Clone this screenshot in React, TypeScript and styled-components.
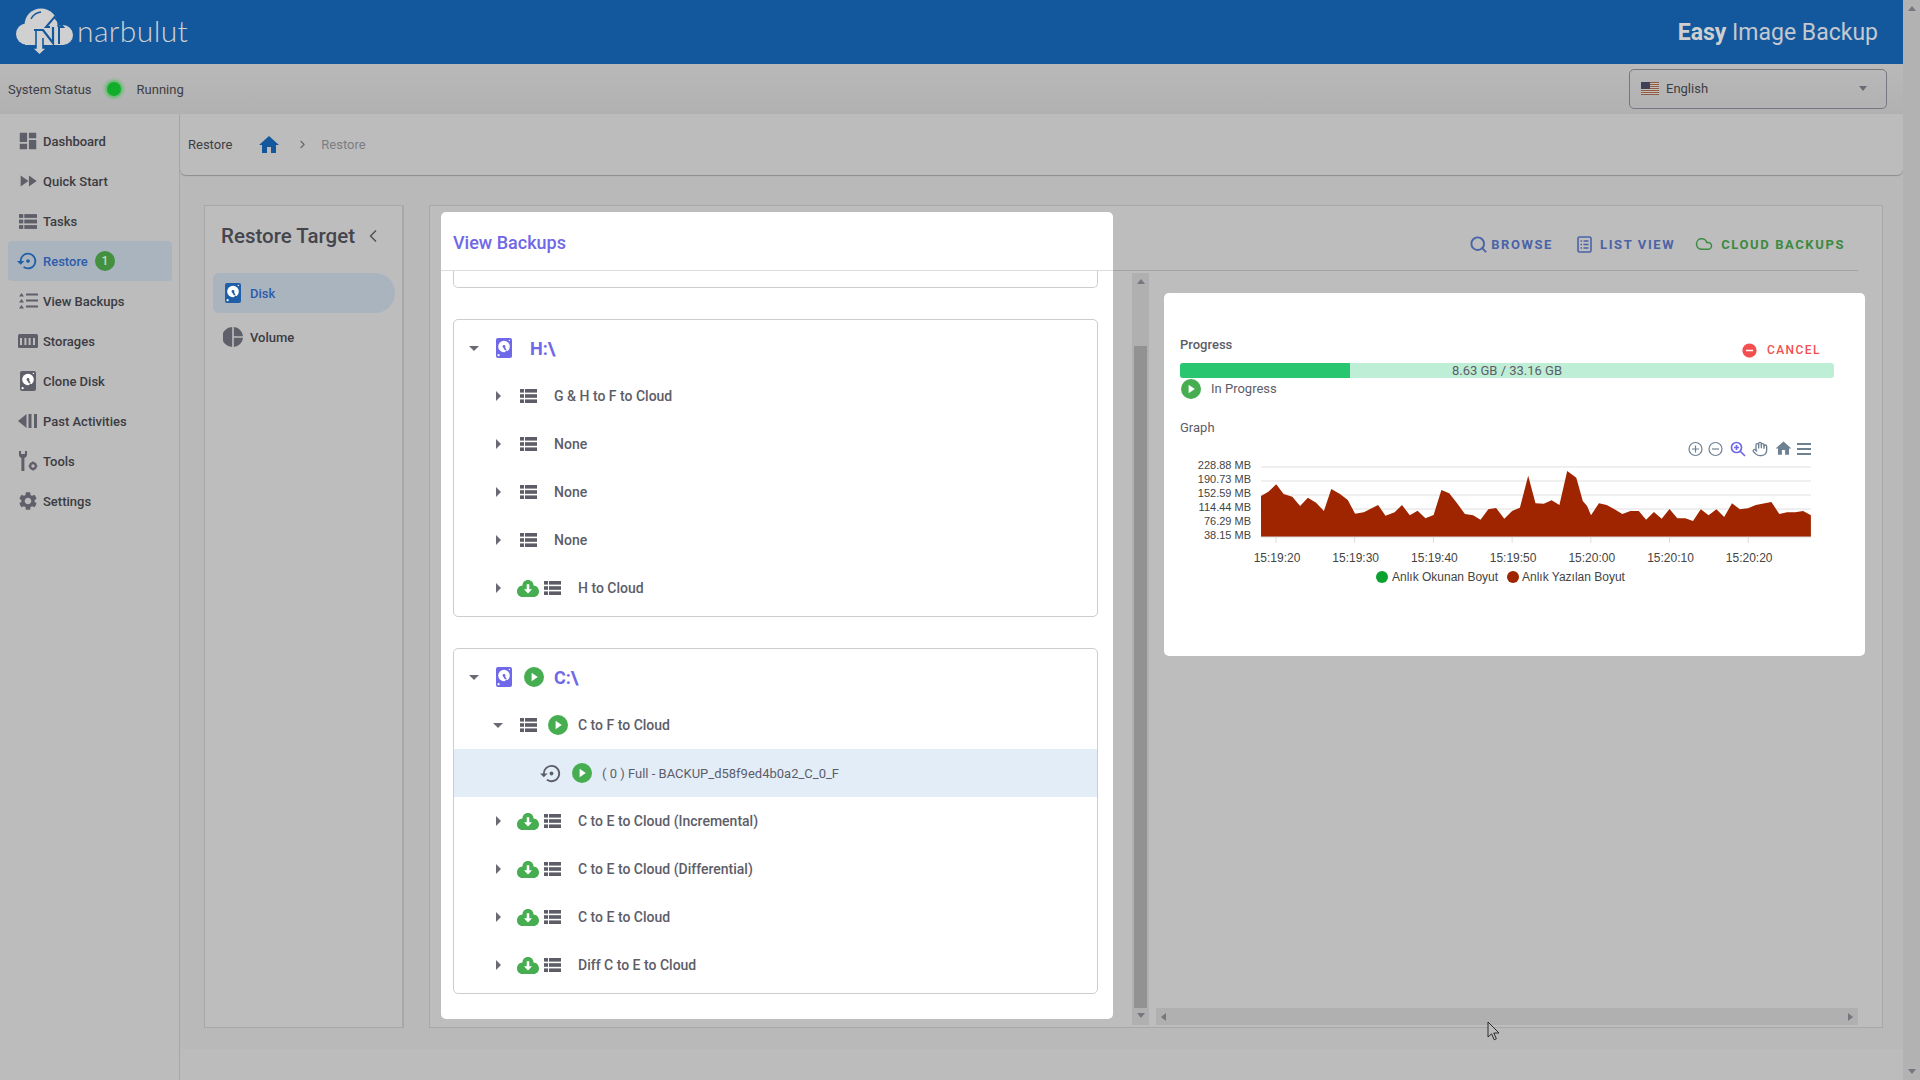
import React from 'react';
import styled, { createGlobalStyle } from 'styled-components';
import { ChevronLeft, ChevronRight, Cloud, Hand, Search } from 'lucide-react';
import {
  MdDashboard,
  MdFastForward,
  MdHome,
  MdRemoveCircle,
  MdSettings,
  MdSettingsBackupRestore,
} from 'react-icons/md';

const GlobalStyle = createGlobalStyle`
  html, body {
    margin: 0;
    padding: 0;
    width: 1920px;
    height: 1080px;
    overflow: hidden;
    background: #bcbcbc;
  }
  * { box-sizing: border-box; }
  body { font-family: "Roboto", "Liberation Sans", sans-serif; }
`;

const Root = styled.div`
  position: relative;
  display: flex;
  width: 1920px;
  height: 1080px;
  overflow: hidden;
`;

const Page = styled.div`
  display: flex;
  flex-direction: column;
  width: 1903px;
`;

const PageScroll = styled.div`
  width: 17px;
  background: #b2b2b2;
  display: flex;
  flex-direction: column;
  justify-content: space-between;
  align-items: center;
  padding: 6px 0;
`;

const Arrow = styled.span<{ $dir: 'up' | 'down' | 'left' | 'right'; $color?: string }>`
  display: block;
  width: 0;
  height: 0;
  border-style: solid;
  border-color: transparent;
  ${p => p.$dir === 'up' && `border-width: 0 4px 5px 4px; border-bottom-color: ${p.$color || '#77777f'};`}
  ${p => p.$dir === 'down' && `border-width: 5px 4px 0 4px; border-top-color: ${p.$color || '#77777f'};`}
  ${p => p.$dir === 'left' && `border-width: 4px 5px 4px 0; border-right-color: ${p.$color || '#77777f'};`}
  ${p => p.$dir === 'right' && `border-width: 4px 0 4px 5px; border-left-color: ${p.$color || '#77777f'};`}
`;

// Header
const Header = styled.header`
  height: 64px;
  flex: none;
  background: #13589d;
  display: flex;
  align-items: center;
  justify-content: space-between;
  padding: 0 25px 0 15px;
`;

const Logo = styled.div`
  display: flex;
  align-items: center;
  gap: 2px;
`;

const LogoText = styled.span`
  font-family: "Lato", "Roboto", sans-serif;
  font-weight: 300;
  font-size: 30px;
  letter-spacing: 0.4px;
  line-height: 44px;
  color: #cfcfcf;
  margin-top: -4px;
`;

const Product = styled.div`
  font-size: 23px;
  color: #c4c8cf;
  margin-top: 1px;
  b { font-weight: 700; color: #cfcfcf; }
`;

const StatusBar = styled.div`
  height: 50px;
  flex: none;
  background: linear-gradient(#b9b9b9, #b1b1b1);
  display: flex;
  align-items: center;
  padding: 0 16px 0 8px;
  font-size: 13px;
  color: #3d3d44;
`;

const StatusDot = styled.span`
  width: 14px;
  height: 14px;
  margin: 0 16px 0 15px;
  border-radius: 50%;
  background: #12ad2b;
  box-shadow: 0 0 0 2px rgba(90, 190, 105, 0.7), 0 0 0 4px rgba(120, 190, 130, 0.35);
`;

const LangSelect = styled.div`
  margin-left: auto;
  width: 258px;
  height: 40px;
  border: 1px solid #77777f;
  border-radius: 5px;
  display: flex;
  align-items: center;
  padding: 0 19px 1px 11px;
  gap: 7px;
  color: #3d3d44;
  span:last-child { margin-left: auto; }
`;

const Body = styled.div`
  flex: 1;
  display: flex;
  min-height: 0;
`;

// Sidebar
const Sidebar = styled.nav`
  width: 180px;
  flex: none;
  background: #bcbcbc;
  border-right: 1px solid #a8a8a8;
  padding: 7px 0 0 8px;
`;

const NavItem = styled.div<{ $active?: boolean }>`
  width: 164px;
  height: 40px;
  display: flex;
  align-items: center;
  padding-left: 9px;
  border-radius: 4px;
  font-size: 13px;
  font-weight: 500;
  color: ${p => (p.$active ? '#2c5cab' : '#3b3b42')};
  background: ${p => (p.$active ? '#a9b4bf' : 'transparent')};
`;

const NavIcon = styled.span<{ $active?: boolean }>`
  width: 22px;
  height: 22px;
  margin-right: 4px;
  display: flex;
  align-items: center;
  justify-content: center;
  color: ${p => (p.$active ? '#1f5ea8' : '#5f5f6a')};
`;

const Badge = styled.span`
  width: 20px;
  height: 20px;
  margin-left: 7px;
  border-radius: 50%;
  background: #43903f;
  color: #c9d9c8;
  font-size: 12px;
  display: flex;
  align-items: center;
  justify-content: center;
`;

// Content
const Content = styled.main`
  flex: 1;
  display: flex;
  flex-direction: column;
  min-width: 0;
  background: #b9b9b9;
`;

const Breadcrumb = styled.div`
  height: 61px;
  flex: none;
  background: #bcbcbc;
  border-radius: 0 0 6px 6px;
  box-shadow: 0 1px 1px #8c8c8c;
  display: flex;
  align-items: center;
  padding: 0 8px;
  font-size: 13px;
  color: #3d3d44;
`;

const Crumb = styled.span<{ $muted?: boolean; $ml?: number }>`
  margin-left: ${p => p.$ml || 0}px;
  color: ${p => (p.$muted ? '#7d7d82' : 'inherit')};
  display: flex;
  align-items: center;
`;

const Workspace = styled.div`
  height: 874px;
  flex: none;
  display: flex;
  padding: 30px 20px 21px 24px;
  gap: 25px;
`;

const TargetPanel = styled.aside`
  width: 200px;
  background: #bdbdbd;
  border: 1px solid #a8a8a8;
  border-right-width: 2px;
  padding: 0 8px 0 8px;
`;

const TargetTitle = styled.div`
  height: 67px;
  display: flex;
  align-items: center;
  gap: 8px;
  padding: 0 0 7px 8px;
  font-size: 20.5px;
  font-weight: 500;
  color: #45454d;
`;

const TargetItem = styled.div<{ $active?: boolean }>`
  width: 182px;
  height: 40px;
  margin-bottom: 4px;
  display: flex;
  align-items: center;
  padding-left: 10px;
  gap: 7px;
  font-size: 13px;
  font-weight: 500;
  border-radius: 6px 20px 20px 6px;
  color: ${p => (p.$active ? '#2c5cab' : '#3b3b42')};
  background: ${p => (p.$active ? '#a9b4bf' : 'transparent')};
`;

const TargetIcon = styled.span<{ $active?: boolean }>`
  width: 20px;
  display: flex;
  justify-content: center;
  color: ${p => (p.$active ? '#1f5ea8' : '#5f5f6a')};
`;

const MainPanel = styled.section`
  flex: 1;
  display: flex;
  background: #bdbdbd;
  border: 1px solid #a8a8a8;
  padding: 6px 24px 0 11px;
  min-width: 0;
`;

const BackupsCard = styled.div`
  width: 672px;
  height: 807px;
  flex: none;
  background: #fff;
  border-radius: 5px;
  display: flex;
  flex-direction: column;
  overflow: hidden;
`;

const BackupsHead = styled.div`
  height: 59px;
  flex: none;
  display: flex;
  align-items: center;
  padding: 3px 12px 0;
  border-bottom: 1px solid #dcdcdc;
  font-size: 18px;
  font-weight: 500;
  color: #6f68e8;
`;

const BackupsList = styled.div`
  padding: 0 15px 0 12px;
  display: flex;
  flex-direction: column;
  gap: 31px;
`;

const TreeCard = styled.div<{ $clipped?: boolean }>`
  border: 1px solid #cdcdcd;
  border-radius: 5px;
  padding: 4px 0;
  ${p => p.$clipped && `
    height: 17px;
    border-top: 0;
    border-radius: 0 0 5px 5px;
  `}
`;

const Row = styled.div<{ $level: number; $selected?: boolean }>`
  height: 48px;
  display: flex;
  align-items: center;
  padding-left: ${p => [8, 32, 85][p.$level]}px;
  background: ${p => (p.$selected ? '#e3edf8' : 'transparent')};
`;

const Slot = styled.span<{ $ml?: number }>`
  width: 24px;
  height: 24px;
  flex: none;
  margin-left: ${p => p.$ml || 0}px;
  display: flex;
  align-items: center;
  justify-content: center;
  color: #5d5d68;
`;

const Caret = styled.span<{ $open?: boolean }>`
  width: 0;
  height: 0;
  border-style: solid;
  border-color: transparent;
  ${p =>
    p.$open
      ? 'border-width: 5px 5px 0 5px; border-top-color: #6a6a74;'
      : 'border-width: 5px 0 5px 5px; border-left-color: #6a6a74;'}
`;

const RowLabel = styled.span<{ $ml: number; $small?: boolean }>`
  margin-left: ${p => p.$ml}px;
  font-size: ${p => (p.$small ? 13 : 14)}px;
  font-weight: ${p => (p.$small ? 400 : 500)};
  color: #5d5d68;
`;

const DriveLabel = styled.span<{ $ml: number }>`
  margin-left: ${p => p.$ml}px;
  font-size: 18px;
  font-weight: 700;
  color: #6f68e8;
`;

const RightColumn = styled.div`
  flex: 1;
  min-width: 0;
  display: flex;
  flex-direction: column;
`;

const Toolbar = styled.div`
  height: 59px;
  flex: none;
  display: flex;
  justify-content: flex-end;
  align-items: center;
  gap: 20px;
  padding: 6px 13px 0 0;
  border-bottom: 1px solid #a3a3a3;
`;

const ToolButton = styled.div<{ $green?: boolean; $browse?: boolean }>`
  display: flex;
  align-items: center;
  gap: ${p => (p.$browse ? 3 : 8)}px;
  margin-right: ${p => (p.$browse ? 4 : 0)}px;
  font-size: 13px;
  font-weight: 700;
  letter-spacing: 1.6px;
  color: ${p => (p.$green ? '#3b8a3f' : '#4a63a8')};
`;

const Split = styled.div`
  flex: 1;
  min-height: 0;
  display: flex;
  padding: 2px 0 2px 19px;
  gap: 7px;
`;

const VScroll = styled.div`
  width: 17px;
  flex: none;
  background: #b0b0b0;
  display: flex;
  flex-direction: column;
  align-items: center;
  padding-top: 6px;
`;

const VThumb = styled.div`
  width: 13px;
  height: 662px;
  margin: 62px 0 5px;
  background: #929292;
`;

const Pane = styled.div`
  flex: 1;
  min-width: 0;
  display: flex;
  flex-direction: column;
`;

const ProgressCard = styled.div`
  width: 701px;
  height: 363px;
  flex: none;
  margin: 20px 0 0 8px;
  background: #fff;
  border-radius: 5px;
  padding: 44px 31px 0 16px;
`;

const ProgressHead = styled.div`
  height: 26px;
  display: flex;
  justify-content: space-between;
  font-size: 13px;
  font-weight: 500;
  color: #5d5d68;
`;

const CancelButton = styled.div`
  display: flex;
  align-items: center;
  gap: 9px;
  height: 26px;
  padding-right: 13px;
  font-size: 12px;
  font-weight: 500;
  letter-spacing: 1.45px;
  color: #f44f4f;
`;

const ProgressTrack = styled.div`
  position: relative;
  height: 15px;
  background: #bfeed6;
  border-radius: 3px;
  overflow: hidden;
  text-align: center;
  font-size: 13px;
  line-height: 15px;
  color: #5d5d68;
`;

const ProgressFill = styled.div`
  position: absolute;
  left: 0;
  top: 0;
  bottom: 0;
  background: #28c76f;
`;

const ProgressText = styled.span`
  position: relative;
`;

const StateRow = styled.div`
  height: 20px;
  margin-top: 1px;
  display: flex;
  align-items: center;
  gap: 10px;
  padding-left: 1px;
  font-size: 13px;
  color: #5d5d68;
`;

const StateText = styled.span`
  margin-top: -2px;
`;

const GraphTitle = styled.div`
  margin-top: 21px;
  height: 16px;
  line-height: 16px;
  font-size: 13px;
  color: #5d5d68;
`;

const ChartSvg = styled.svg`
  display: block;
  font-family: "Liberation Sans", Arial, sans-serif;
`;

const HScroll = styled.div`
  height: 17px;
  flex: none;
  margin-top: auto;
  background: #b0b0b0;
  display: flex;
  align-items: center;
  justify-content: space-between;
  padding: 0 5px;
`;

const Footer = styled.footer`
  flex: 1;
  background: #bcbcbc;
`;

const Pointer = styled.svg`
  position: absolute;
  left: 1487px;
  top: 1021px;
`;

// Icons
const ListIcon = () => (
  <svg width="17" height="14" viewBox="0 0 17 14" fill="currentColor">
    <rect x="0" y="0" width="4" height="3.6" /><rect x="5" y="0" width="12" height="3.6" />
    <rect x="0" y="5.2" width="4" height="3.6" /><rect x="5" y="5.2" width="12" height="3.6" />
    <rect x="0" y="10.4" width="4" height="3.6" /><rect x="5" y="10.4" width="12" height="3.6" />
  </svg>
);

const DiskIcon = ({ size = 20, color = 'currentColor' }: { size?: number; color?: string }) => (
  <svg width={size * 0.8} height={size} viewBox="0 0 16 20">
    <rect width="16" height="20" rx="2" fill={color} />
    <circle cx="8" cy="8.5" r="5.8" fill="#fff" />
    <circle cx="8" cy="8.5" r="1.4" fill={color} />
    <path d="M8 9l4.4 8" stroke={color} strokeWidth="1.6" />
    <path d="M6.8 13.5l5-1.6" stroke="#fff" strokeWidth="0.8" />
    <circle cx="2.6" cy="17.2" r="1.1" fill="#fff" />
    <circle cx="13.4" cy="2.4" r="0.7" fill="#fff" />
  </svg>
);

const PlayIcon = ({ size = 20 }: { size?: number }) => (
  <svg width={size} height={size} viewBox="0 0 20 20">
    <circle cx="10" cy="10" r="10" fill="#46ae50" />
    <path d="M7.6 5.8L13.8 10l-6.2 4.2z" fill="#fff" />
  </svg>
);

const CloudDownIcon = () => (
  <svg width="22" height="17" viewBox="0 0 24 18.5">
    <path
      d="M12 0C8.4 0 6 2.6 6 6 2.5 6.2 0 9 0 12.5 0 15.8 2.6 18.5 5.8 18.5h12.4c3.2 0 5.8-2.7 5.8-6 0-3.5-2.5-6.3-6-6.5C18 2.6 15.6 0 12 0z"
      fill="#46ae50"
    />
    <path d="M10.6 4.5h2.8v5.6h3L12 14.6l-4.4-4.5h3z" fill="#fff" />
  </svg>
);

const VolumeIcon = () => (
  <svg width="20" height="20" viewBox="0 0 20 20" fill="currentColor">
    <path d="M9.2 0v20A10 10 0 0 1 9.2 0z" />
    <path d="M10.8 0A10 10 0 0 1 20 9.2h-9.2z" />
    <path d="M10.8 10.8H20A10 10 0 0 1 10.8 20z" />
  </svg>
);

const RowsIcon = () => (
  <svg width="18" height="15" viewBox="0 0 17 14" fill="currentColor">
    <rect x="0" y="0" width="4" height="3.6" /><rect x="5" y="0" width="12" height="3.6" />
    <rect x="0" y="5.2" width="4" height="3.6" /><rect x="5" y="5.2" width="12" height="3.6" />
    <rect x="0" y="10.4" width="4" height="3.6" /><rect x="5" y="10.4" width="12" height="3.6" />
  </svg>
);

const BulletListIcon = () => (
  <svg width="19" height="16" viewBox="0 0 19 16" fill="currentColor">
    <path d="M2.5 0L5 3.5H0zM2.5 6L5 9.5H0zM2.5 12L5 15.5H0z" />
    <rect x="7" y="0.5" width="12" height="2" /><rect x="7" y="6.5" width="12" height="2" />
    <rect x="7" y="12.5" width="12" height="2" />
  </svg>
);

const StorageIcon = () => (
  <svg width="20" height="14" viewBox="0 0 20 14">
    <rect width="20" height="14" rx="1.5" fill="currentColor" />
    <rect x="2" y="4" width="2" height="7" fill="#bcbcbc" /><rect x="6.4" y="4" width="2" height="7" fill="#bcbcbc" />
    <rect x="10.6" y="4" width="2" height="7" fill="#bcbcbc" /><rect x="15" y="4" width="2" height="7" fill="#bcbcbc" />
  </svg>
);

const PastIcon = () => (
  <svg width="20" height="14" viewBox="0 0 20 14" fill="currentColor">
    <path d="M0 7L8.5 0v14z" /><rect x="10.5" y="0" width="3" height="14" /><rect x="16" y="0" width="3" height="14" />
  </svg>
);

const ToolsIcon = () => (
  <svg width="19" height="20" viewBox="0 0 19 20" fill="currentColor">
    <path d="M0 0v3.6C0 5.4 1 6.5 2.4 7V20h3V7C6.8 6.5 8 5.4 8 3.6V0L6 0v3H2V0z" />
    <circle cx="14" cy="15" r="2.8" fill="none" stroke="currentColor" strokeWidth="2.2" />
    <path d="M14 10.6v1.6M14 17.8v1.6M9.6 15h1.6M16.8 15h1.6" stroke="currentColor" strokeWidth="1.6" />
  </svg>
);

const ListViewIcon = () => (
  <svg width="15" height="17" viewBox="0 0 15 17" fill="none" stroke="currentColor" strokeWidth="1.6">
    <rect x="1" y="1" width="13" height="15" rx="1.5" />
    <path d="M3.5 5h1.5M6.5 5h5M3.5 8.5h1.5M6.5 8.5h5M3.5 12h1.5M6.5 12h5" strokeWidth="1.3" />
  </svg>
);

const FlagIcon = () => (
  <svg width="18" height="13" viewBox="0 0 18 13">
    <rect width="18" height="13" fill="#c6c2bb" />
    {[0, 2, 4, 6, 8, 10, 12].map(y => (
      <rect key={y} y={y} width="18" height="1" fill="#8e5a44" />
    ))}
    <rect width="9" height="7" fill="#3f4257" />
  </svg>
);

const LogoMark = () => (
  <svg width="60" height="48" viewBox="0 0 60 48">
    <g fill="#d0d0d0">
      <circle cx="11.5" cy="26" r="10.5" />
      <circle cx="26" cy="17" r="16.5" />
      <circle cx="48" cy="27" r="10" />
      <rect x="10" y="22" width="38" height="15" />
    </g>
    <path d="M16 11a13 13 0 0 1 10-7" stroke="#13589d" strokeWidth="1.4" fill="none" />
    <path d="M35 19h-4l8.5-10 8.5 10h-4v17" fill="none" stroke="#13589d" strokeWidth="2" />
    <path d="M19 22h9l10 13V19" fill="none" stroke="#13589d" strokeWidth="2.2" />
    <path d="M21 22v18h-4l7.5 7 7.5-7h-4V30" fill="#d0d0d0" stroke="#13589d" strokeWidth="1.6" />
  </svg>
);

const navItems: { label: string; icon: React.ReactNode; active?: boolean; badge?: string }[] = [
  { label: 'Dashboard', icon: <MdDashboard size={22} /> },
  { label: 'Quick Start', icon: <MdFastForward size={22} /> },
  { label: 'Tasks', icon: <RowsIcon /> },
  { label: 'Restore', icon: <MdSettingsBackupRestore size={22} />, active: true, badge: '1' },
  { label: 'View Backups', icon: <BulletListIcon /> },
  { label: 'Storages', icon: <StorageIcon /> },
  { label: 'Clone Disk', icon: <DiskIcon /> },
  { label: 'Past Activities', icon: <PastIcon /> },
  { label: 'Tools', icon: <ToolsIcon /> },
  { label: 'Settings', icon: <MdSettings size={22} /> },
];

type TaskRow = { label: string; cloud?: boolean };

const hRows: TaskRow[] = [
  { label: 'G & H to F to Cloud' },
  { label: 'None' },
  { label: 'None' },
  { label: 'None' },
  { label: 'H to Cloud', cloud: true },
];

const cRows: TaskRow[] = [
  { label: 'C to E to Cloud (Incremental)', cloud: true },
  { label: 'C to E to Cloud (Differential)', cloud: true },
  { label: 'C to E to Cloud', cloud: true },
  { label: 'Diff C to E to Cloud', cloud: true },
];

const Task = ({ label, cloud }: TaskRow) => (
  <Row $level={1}>
    <Slot><Caret /></Slot>
    {cloud && <Slot $ml={6}><CloudDownIcon /></Slot>}
    <Slot $ml={cloud ? 0 : 6}><ListIcon /></Slot>
    <RowLabel $ml={14}>{label}</RowLabel>
  </Row>
);

// chart points were read from the screenshot, in its own crop units
const chartPoints = [
  [233, 228], [250, 215], [268, 193], [285, 222], [305, 230], [323, 258], [341, 233], [360, 248], [378, 273],
  [395, 207], [415, 222], [433, 240], [450, 281], [470, 277], [503, 255], [520, 287], [541, 277], [558, 255],
  [576, 286], [594, 272], [612, 295], [631, 285], [649, 210], [667, 220], [685, 250], [703, 282], [722, 286],
  [739, 299], [757, 268], [775, 264], [794, 296], [812, 273], [830, 263], [849, 167], [866, 250], [885, 251],
  [903, 241], [921, 255], [939, 153], [960, 173], [975, 243], [985, 258], [994, 286], [1012, 250], [1030, 255],
  [1048, 268], [1066, 282], [1085, 273], [1104, 273], [1121, 299], [1139, 276], [1157, 296], [1175, 267],
  [1193, 295], [1211, 295], [1229, 303], [1247, 268], [1265, 286], [1283, 268], [1301, 291], [1319, 250],
  [1337, 268], [1356, 265], [1374, 255], [1410, 246], [1428, 282], [1446, 277], [1465, 277], [1483, 273],
  [1501, 286],
];

const px = (x: number) => x / 2.306 - 20;
const py = (y: number) => y / 3 - 16;

const areaPath =
  `M${px(233)} ${py(351)} ` +
  chartPoints.map(([x, y]) => `L${px(x).toFixed(1)} ${py(y).toFixed(1)}`).join(' ') +
  ` L${px(1501)} ${py(351)} Z`;

const yLabels = ['228.88 MB', '190.73 MB', '152.59 MB', '114.44 MB', '76.29 MB', '38.15 MB'];
const xLabels = ['15:19:20', '15:19:30', '15:19:40', '15:19:50', '15:20:00', '15:20:10', '15:20:20'];

const Chart = () => (
  <ChartSvg width="654" height="158" viewBox="0 0 654 158">
    {[0, 1, 2, 3].map(i => (
      <line key={i} x1="81" x2="631" y1={31 + i * 14} y2={31 + i * 14} stroke="#efefef" strokeWidth="2" />
    ))}
    {yLabels.map((t, i) => (
      <text key={t} x="71" y={33 + i * 14} textAnchor="end" fontSize="11" fill="#444">{t}</text>
    ))}
    <path d={areaPath} fill="#9e2500" />
    <line x1="81" x2="631" y1="101" y2="101" stroke="#d8d8d8" />
    {xLabels.map((t, i) => {
      const x = 96 + i * 78.7;
      return (
        <g key={t}>
          <line x1={x} x2={x} y1="101" y2="107" stroke="#dcdcdc" />
          <text x={x + 1} y="126" textAnchor="middle" fontSize="12" fill="#444">{t}</text>
        </g>
      );
    })}
    <circle cx="202" cy="141" r="6" fill="#0aa12e" />
    <text x="212" y="145" fontSize="12" fill="#444">Anlık Okunan Boyut</text>
    <circle cx="333" cy="141" r="6" fill="#9e2500" />
    <text x="342" y="145" fontSize="12" fill="#444">Anlık Yazılan Boyut</text>
    {/* chart toolbar */}
    <g fill="none" stroke="#6e8192" strokeWidth="1.2">
      <circle cx="515.5" cy="13" r="6.5" />
      <path d="M512 13h7M515.5 9.5v7" />
      <circle cx="535.5" cy="13" r="6.5" />
      <path d="M532 13h7" />
    </g>
    <g fill="none" stroke="#6f68e8" strokeWidth="1.7">
      <circle cx="556.5" cy="11.5" r="5" />
      <path d="M560 15l5 5M554 11.5h5M556.5 9v5" />
    </g>
    <Hand x={572} y={5} width={16} height={16} color="#6e8192" />
    <MdHome x={594} y={3} size={19} color="#6e8192" />
    <g stroke="#6e8192" strokeWidth="1.8">
      <path d="M617 8h14M617 13h14M617 18h14" />
    </g>
  </ChartSvg>
);

export default function App() {
  return (
    <Root>
      <GlobalStyle />
      <Page>
        <Header>
          <Logo>
            <LogoMark />
            <LogoText>narbulut</LogoText>
          </Logo>
          <Product><b>Easy</b> Image Backup</Product>
        </Header>
        <StatusBar>
          System Status
          <StatusDot />
          Running
          <LangSelect>
            <FlagIcon />
            English
            <Arrow $dir="down" $color="#6a6a74" />
          </LangSelect>
        </StatusBar>
        <Body>
          <Sidebar>
            {navItems.map(item => (
              <NavItem key={item.label} $active={item.active}>
                <NavIcon $active={item.active}>{item.icon}</NavIcon>
                {item.label}
                {item.badge && <Badge>{item.badge}</Badge>}
              </NavItem>
            ))}
          </Sidebar>
          <Content>
            <Breadcrumb>
              Restore
              <Crumb $ml={25}><MdHome size={24} color="#13589d" /></Crumb>
              <Crumb $ml={15}><ChevronRight size={13} color="#66666e" /></Crumb>
              <Crumb $muted $ml={12}>Restore</Crumb>
            </Breadcrumb>
            <Workspace>
              <TargetPanel>
                <TargetTitle>
                  Restore Target
                  <ChevronLeft size={20} color="#55555d" />
                </TargetTitle>
                <TargetItem $active>
                  <TargetIcon $active><DiskIcon /></TargetIcon>
                  Disk
                </TargetItem>
                <TargetItem>
                  <TargetIcon><VolumeIcon /></TargetIcon>
                  Volume
                </TargetItem>
              </TargetPanel>
              <MainPanel>
                <BackupsCard>
                  <BackupsHead>View Backups</BackupsHead>
                  <BackupsList>
                    <TreeCard $clipped />
                    <TreeCard>
                      <Row $level={0}>
                        <Slot><Caret $open /></Slot>
                        <Slot $ml={6}><DiskIcon color="#6f68e8" /></Slot>
                        <DriveLabel $ml={14}>H:\</DriveLabel>
                      </Row>
                      {hRows.map((r, i) => <Task key={i} {...r} />)}
                    </TreeCard>
                    <TreeCard>
                      <Row $level={0}>
                        <Slot><Caret $open /></Slot>
                        <Slot $ml={6}><DiskIcon color="#6f68e8" /></Slot>
                        <Slot $ml={6}><PlayIcon /></Slot>
                        <DriveLabel $ml={8}>C:\</DriveLabel>
                      </Row>
                      <Row $level={1}>
                        <Slot><Caret $open /></Slot>
                        <Slot $ml={6}><ListIcon /></Slot>
                        <Slot $ml={6}><PlayIcon /></Slot>
                        <RowLabel $ml={8}>C to F to Cloud</RowLabel>
                      </Row>
                      <Row $level={2} $selected>
                        <Slot><MdSettingsBackupRestore size={23} /></Slot>
                        <Slot $ml={7}><PlayIcon /></Slot>
                        <RowLabel $ml={8} $small>( 0 ) Full - BACKUP_d58f9ed4b0a2_C_0_F</RowLabel>
                      </Row>
                      {cRows.map((r, i) => <Task key={i} {...r} />)}
                    </TreeCard>
                  </BackupsList>
                </BackupsCard>
                <RightColumn>
                  <Toolbar>
                    <ToolButton $browse><Search size={19} strokeWidth={2.4} />BROWSE</ToolButton>
                    <ToolButton><ListViewIcon />LIST VIEW</ToolButton>
                    <ToolButton $green><Cloud size={18} />CLOUD BACKUPS</ToolButton>
                  </Toolbar>
                  <Split>
                    <VScroll>
                      <Arrow $dir="up" />
                      <VThumb />
                      <Arrow $dir="down" />
                    </VScroll>
                    <Pane>
                      <ProgressCard>
                        <ProgressHead>
                          Progress
                          <CancelButton>
                            <MdRemoveCircle size={17} />
                            CANCEL
                          </CancelButton>
                        </ProgressHead>
                        <ProgressTrack>
                          <ProgressFill style={{ width: `${(8.63 / 33.16) * 100}%` }} />
                          <ProgressText>8.63 GB / 33.16 GB</ProgressText>
                        </ProgressTrack>
                        <StateRow>
                          <PlayIcon />
                          <StateText>In Progress</StateText>
                        </StateRow>
                        <GraphTitle>Graph</GraphTitle>
                        <Chart />
                      </ProgressCard>
                      <HScroll>
                        <Arrow $dir="left" />
                        <Arrow $dir="right" />
                      </HScroll>
                    </Pane>
                  </Split>
                </RightColumn>
              </MainPanel>
            </Workspace>
            <Footer />
          </Content>
        </Body>
      </Page>
      <PageScroll>
        <Arrow $dir="up" />
        <Arrow $dir="down" />
      </PageScroll>
      <Pointer width="14" height="20" viewBox="0 0 14 20">
        <path d="M1 1v15l3.6-3.2 2.6 6 2.2-1-2.6-5.8H12z" fill="#bdbdbd" stroke="#2b2b2b" strokeWidth="1" />
      </Pointer>
    </Root>
  );
}
